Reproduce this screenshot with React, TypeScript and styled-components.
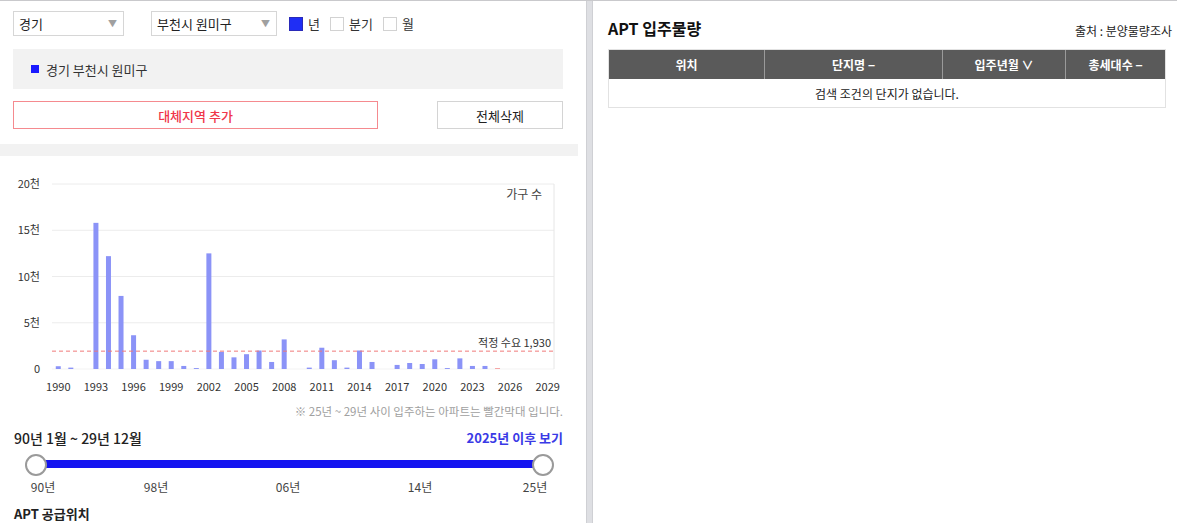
import React from "react";
import styled, { createGlobalStyle } from "styled-components";

const Global = createGlobalStyle`
  html, body { margin: 0; padding: 0; background: #fff; }
  body { font-family: "Noto Sans CJK KR", "Noto Sans", sans-serif; color: #222; }
  * { box-sizing: border-box; }
`;

const Page = styled.div`
  display: flex;
  height: 523px;
  border-top: 1px solid #c9c9cc;
  overflow: hidden;
`;

const LeftPanel = styled.div`
  width: 586px;
  flex: none;
  display: flex;
  flex-direction: column;
`;

const Divider = styled.div`
  width: 7px;
  flex: none;
  background: #dedfe3;
  border-left: 1px solid #cfd0d4;
  border-right: 1px solid #cfd0d4;
`;

const RightPanel = styled.div`
  flex: 1;
  padding: 0 5px 0 15px;
  display: flex;
  flex-direction: column;
`;

const ControlRow = styled.div`
  display: flex;
  align-items: center;
  padding: 10px 13px 0;
  height: 35px;
`;

const Select = styled.div<{ $w: number; $mr: number }>`
  width: ${(p) => p.$w}px;
  margin-right: ${(p) => p.$mr}px;
  height: 25px;
  border: 1px solid #d6d6d6;
  display: flex;
  align-items: center;
  justify-content: space-between;
  padding: 0 6px 0 5px;
  font-size: 13px;
  color: #222;
`;

const Arrow = styled.span`
  font-size: 9px;
  color: #a0a0a0;
`;

const CheckGroup = styled.label`
  display: flex;
  align-items: center;
  margin-right: 10px;
  font-size: 13px;
  color: #333;
`;

const Box = styled.span<{ $on?: boolean }>`
  width: 14px;
  height: 14px;
  margin-right: 5px;
  border: 1px solid ${(p) => (p.$on ? "#2a2ab8" : "#d2d2d2")};
  background: ${(p) => (p.$on ? "#1f2ef5" : "#fff")};
`;

const RegionBox = styled.div`
  margin: 13px 23px 0 13px;
  height: 41px;
  background: #f2f2f2;
  display: flex;
  align-items: center;
  padding-left: 18px;
  font-size: 13px;
  color: #333;
`;

const Square = styled.span`
  width: 8px;
  height: 8px;
  background: #1a1aff;
  margin-right: 7px;
`;

const ButtonRow = styled.div`
  display: flex;
  justify-content: space-between;
  margin: 12px 23px 0 13px;
`;

const Button = styled.div<{ $w: number; $danger?: boolean }>`
  width: ${(p) => p.$w}px;
  height: 28px;
  display: flex;
  align-items: center;
  justify-content: center;
  font-size: 13px;
  font-weight: ${(p) => (p.$danger ? 500 : 400)};
  color: ${(p) => (p.$danger ? "#f0364a" : "#222")};
  border: 1px solid ${(p) => (p.$danger ? "#f58a8f" : "#d4d4d4")};
`;

const Band = styled.div`
  margin-top: 15px;
  width: 578px;
  height: 12px;
  background: #f2f2f2;
`;

const Chart = styled.svg`
  display: block;
  flex: none;
`;

const Note = styled.div`
  text-align: right;
  padding-right: 23px;
  font-size: 11.5px;
  color: #a0a0a0;
  margin-top: 8px;
  height: 18px;
`;

const RangeHeader = styled.div`
  display: flex;
  justify-content: space-between;
  align-items: center;
  padding: 0 23px 0 14px;
  margin-top: 6px;
  height: 22px;
`;

const RangeTitle = styled.span`
  font-size: 14px;
  font-weight: 500;
  color: #222;
`;

const RangeLink = styled.span`
  font-size: 13px;
  font-weight: 700;
  color: #3a3ae6;
`;

const SliderWrap = styled.div`
  position: relative;
  margin: 4px 0 0;
  height: 24px;
  padding: 0 43px 0 36px;
  display: flex;
  align-items: center;
`;

const Track = styled.div`
  flex: 1;
  height: 8px;
  background: #1414f0;
`;

const Handle = styled.span<{ $left: number }>`
  position: absolute;
  top: 1px;
  left: ${(p) => p.$left - 11}px;
  width: 22px;
  height: 22px;
  border-radius: 50%;
  background: #fff;
  border: 2px solid #9a9a9a;
`;

const Ticks = styled.div`
  position: relative;
  height: 20px;
  font-size: 12px;
  color: #444;
`;

const Tick = styled.span`
  position: absolute;
  top: 2px;
  transform: translateX(-50%);
`;

const SectionTitle = styled.div`
  padding-left: 14px;
  margin-top: 8px;
  font-size: 13px;
  font-weight: 700;
  color: #222;
`;

const RightHeader = styled.div`
  display: flex;
  justify-content: space-between;
  align-items: flex-end;
  margin-top: 17px;
  height: 22px;
`;

const RightTitle = styled.span`
  font-size: 16px;
  font-weight: 700;
  color: #111;
`;

const Source = styled.span`
  font-size: 12px;
  color: #222;
  margin-bottom: 1px;
`;

const Table = styled.div`
  margin-top: 9px;
  width: 558px;
  border: 1px solid #e2e2e2;
`;

const HeadRow = styled.div`
  display: grid;
  grid-template-columns: 156px 178px 123px 1fr;
  height: 29px;
  background: #5a5a5a;
`;

const HeadCell = styled.div<{ $last?: boolean }>`
  display: flex;
  align-items: center;
  justify-content: center;
  color: #fff;
  font-size: 12px;
  font-weight: 700;
  border-right: ${(p) => (p.$last ? "none" : "1px solid #9a9a9a")};
  gap: 4px;
`;

const EmptyRow = styled.div`
  height: 28px;
  display: flex;
  align-items: center;
  justify-content: center;
  font-size: 12px;
  color: #222;
`;

const data: number[] = [
  0.3, 0.15, 0, 15.8, 12.2, 7.9, 3.65, 1.0, 0.85, 0.85,
  0.33, 0.1, 12.5, 1.85, 1.26, 1.6, 2.0, 0.76, 3.2, 0,
  0.15, 2.3, 0.95, 0.15, 2.0, 0.76, 0, 0.44, 0.65, 0.54,
  1.05, 0.1, 1.15, 0.33, 0.33, 0.1, 0, 0, 0, 0,
];

const PL = 52;
const PR = 554;
const PT = 28;
const PB = 213;
const per = (PR - PL) / 40;
const yOf = (v: number) => PB - (v / 20) * (PB - PT);
const FF = "Noto Sans CJK KR, sans-serif";

function BarChart() {
  const grid = [0, 5, 10, 15, 20];
  return (
    <Chart width={586} height={239} viewBox="0 0 586 239">
      {grid.map((g) => (
        <line key={g} x1={PL} x2={PR} y1={yOf(g)} y2={yOf(g)} stroke={g === 0 ? "#f3f3f3" : "#ececec"} strokeWidth={1} />
      ))}
      <line x1={PR} x2={PR} y1={PT} y2={PB} stroke="#e6e6e6" />
      {grid.map((g) => (
        <text key={"l" + g} x={40} y={yOf(g) + 4} textAnchor="end" fontSize={11} fill="#333" fontFamily={FF}>
          {g === 0 ? "0" : `${g}천`}
        </text>
      ))}
      {data.map((v, i) => {
        const cx = PL + per * (i + 0.5);
        const h = (v / 20) * (PB - PT);
        if (v <= 0) return null;
        return (
          <rect key={i} x={cx - 2.5} y={PB - h} width={5} height={h} fill={i >= 35 ? "#f5a0a0" : "#8b93f7"} />
        );
      })}
      <line x1={PL} x2={PR} y1={yOf(1.93)} y2={yOf(1.93)} stroke="#f07a7a" strokeDasharray="4 3" strokeWidth={1} />
      <text x={551} y={yOf(1.93) - 4} textAnchor="end" fontSize={11} fill="#333" fontFamily={FF}>
        적정 수요 1,930
      </text>
      <text x={542} y={43} textAnchor="end" fontSize={12} fill="#444" fontFamily={FF}>
        가구 수
      </text>
      {Array.from({ length: 14 }, (_, k) => 1990 + k * 3).map((y) => (
        <text key={y} x={PL + per * (y - 1990 + 0.5)} y={235} textAnchor="middle" fontSize={11} fill="#333" fontFamily={FF}>
          {y}
        </text>
      ))}
    </Chart>
  );
}

const ticks = [
  { label: "90년", x: 43 },
  { label: "98년", x: 156 },
  { label: "06년", x: 288 },
  { label: "14년", x: 420 },
  { label: "25년", x: 535 },
];

export default function App() {
  return (
    <>
      <Global />
      <Page>
        <LeftPanel>
          <ControlRow>
            <Select $w={111} $mr={27}>
              경기<Arrow>▼</Arrow>
            </Select>
            <Select $w={126} $mr={12}>
              부천시 원미구<Arrow>▼</Arrow>
            </Select>
            <CheckGroup>
              <Box $on />년
            </CheckGroup>
            <CheckGroup>
              <Box />분기
            </CheckGroup>
            <CheckGroup>
              <Box />월
            </CheckGroup>
          </ControlRow>
          <RegionBox>
            <Square />경기 부천시 원미구
          </RegionBox>
          <ButtonRow>
            <Button $w={365} $danger>대체지역 추가</Button>
            <Button $w={126}>전체삭제</Button>
          </ButtonRow>
          <Band />
          <BarChart />
          <Note>※ 25년 ~ 29년 사이 입주하는 아파트는 빨간막대 입니다.</Note>
          <RangeHeader>
            <RangeTitle>90년 1월 ~ 29년 12월</RangeTitle>
            <RangeLink>2025년 이후 보기</RangeLink>
          </RangeHeader>
          <SliderWrap>
            <Track />
            <Handle $left={36} />
            <Handle $left={543} />
          </SliderWrap>
          <Ticks>
            {ticks.map((t) => (
              <Tick key={t.label} style={{ left: t.x }}>
                {t.label}
              </Tick>
            ))}
          </Ticks>
          <SectionTitle>APT 공급위치</SectionTitle>
        </LeftPanel>
        <Divider />
        <RightPanel>
          <RightHeader>
            <RightTitle>APT 입주물량</RightTitle>
            <Source>출처 : 분양물량조사</Source>
          </RightHeader>
          <Table>
            <HeadRow>
              <HeadCell>위치</HeadCell>
              <HeadCell>단지명 −</HeadCell>
              <HeadCell>입주년월 ∨</HeadCell>
              <HeadCell $last>총세대수 −</HeadCell>
            </HeadRow>
            <EmptyRow>검색 조건의 단지가 없습니다.</EmptyRow>
          </Table>
        </RightPanel>
      </Page>
    </>
  );
}
